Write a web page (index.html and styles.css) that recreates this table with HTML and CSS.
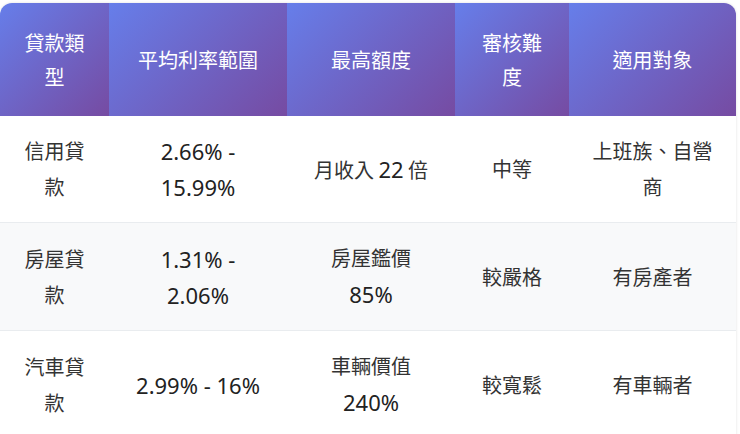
FILE: index.html
```html
<!DOCTYPE html>
<html lang="zh-Hant">
<head>
<meta charset="utf-8">
<link rel="stylesheet" href="styles.css">
</head>
<body>
<div class="table-wrap">
  <table class="loan-table">
    <colgroup>
      <col class="c1"><col class="c2"><col class="c3"><col class="c4"><col class="c5">
    </colgroup>
    <thead>
      <tr>
        <th>貸款類型</th>
        <th>平均利率範圍</th>
        <th>最高額度</th>
        <th>審核難度</th>
        <th>適用對象</th>
      </tr>
    </thead>
    <tbody>
      <tr>
        <td>信用貸款</td>
        <td class="num">2.66% - 15.99%</td>
        <td>月收入 <span class="num">22</span> 倍</td>
        <td>中等</td>
        <td>上班族、自營商</td>
      </tr>
      <tr class="alt">
        <td>房屋貸款</td>
        <td class="num">1.31% - 2.06%</td>
        <td>房屋鑑價 <span class="num">85%</span></td>
        <td>較嚴格</td>
        <td>有房產者</td>
      </tr>
      <tr>
        <td>汽車貸款</td>
        <td class="num">2.99% - 16%</td>
        <td>車輛價值 <span class="num">240%</span></td>
        <td>較寬鬆</td>
        <td>有車輛者</td>
      </tr>
    </tbody>
  </table>
</div>
</body>
</html>
```
FILE: styles.css
```css
html, body {
  margin: 0;
  padding: 0;
  background: #ffffff;
}
body {
  font-family: "Noto Sans CJK TC", "Noto Sans", sans-serif;
  padding-top: 3px;
}
.table-wrap {
  width: 736px;
  border-radius: 12px 12px 0 0;
  overflow: hidden;
  box-shadow: 0 0 3px rgba(0,0,0,0.12);
}
.loan-table {
  width: 736px;
  border-collapse: collapse;
  table-layout: fixed;
}
.c1 { width: 109px; }
.c2 { width: 178px; }
.c3 { width: 168px; }
.c4 { width: 114px; }
.c5 { width: 167px; }
.loan-table th {
  background: linear-gradient(135deg, #667eea 0%, #764ba2 100%);
  color: #ffffff;
  font-weight: 400;
  font-size: 20px;
  line-height: 34px;
  padding: 22px 20px;
  text-align: center;
  height: 113px;
  box-sizing: border-box;
}
.loan-table td {
  color: #333333;
  font-size: 20px;
  line-height: 36px;
  padding: 17px 22px;
  text-align: center;
  border-bottom: 1px solid #e9ecef;
  height: 106px;
  box-sizing: border-box;
}
.loan-table tr.alt td {
  background: #f8f9fa;
  height: 108px;
}
.loan-table .num {
  font-family: "Noto Sans", sans-serif;
  font-size: 22px;
  color: #222222;
}
```
